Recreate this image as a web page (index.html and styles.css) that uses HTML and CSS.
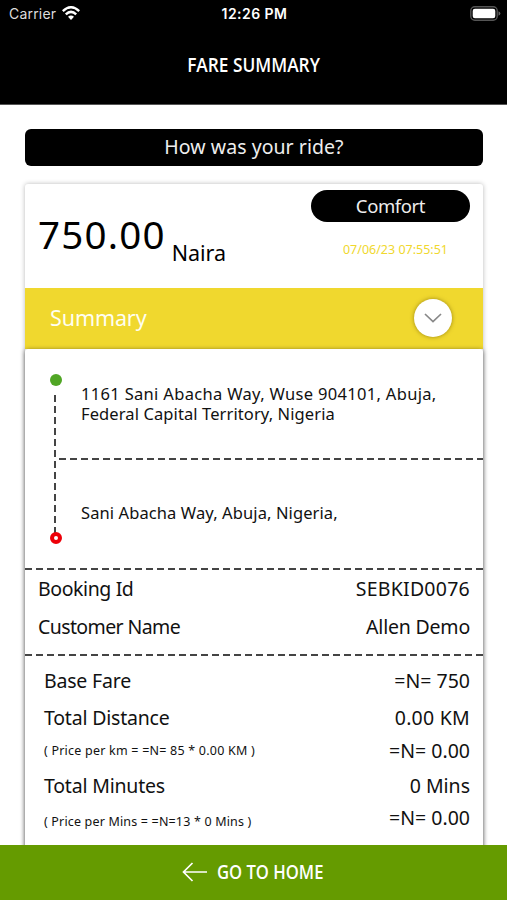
FILE: index.html
```html
<!DOCTYPE html>
<html lang="en">
<head>
<meta charset="utf-8">
<title>Fare Summary</title>
<link rel="stylesheet" href="styles.css">
</head>
<body>
<div class="app">
  <header class="header">
    <div class="status">
      <div class="carrier"><span>Carrier</span>
        <svg class="wifi" viewBox="0 0 18 14" width="18" height="14"><g fill="none" stroke="#fff" stroke-width="2.5"><path d="M.8 5.1Q9-2.5 17.2 5.1"/><path d="M3.8 8.3Q9 3.5 14.2 8.3"/></g><path fill="#fff" d="M6 10.8Q9 8.2 12 10.8L9 14Z"/></svg>
      </div>
      <span class="time">12:26 PM</span>
      <svg class="battery" viewBox="0 0 31 15" width="31" height="15"><rect x=".8" y=".8" width="26.4" height="13.4" rx="4" fill="none" stroke="#555" stroke-width="1.4"/><rect x="2.7" y="2.7" width="22.6" height="9.6" rx="2.2" fill="#fff"/><path d="M28.5 5.2Q30.4 6 30.4 7.5T28.5 9.8Z" fill="#666"/></svg>
    </div>
    <h1 class="title">FARE SUMMARY</h1>
  </header>
  <main class="main">
    <div class="question"><span>How was your ride?</span></div>
    <section class="card">
      <div class="fare">
        <div class="price"><span class="amount">750.00</span><span class="currency">Naira</span></div>
        <div class="meta"><div class="pill"><span>Comfort</span></div><span class="date">07/06/23 07:55:51</span></div>
      </div>
      <div class="summary"><span class="heading">Summary</span>
        <div class="toggle"><svg viewBox="0 0 18 10" width="18" height="10"><path d="M1 1L9 8.5L17 1" fill="none" stroke="#888" stroke-width="1.7"/></svg></div>
      </div>
      <div class="details">
        <div class="route">
          <div class="track"><i class="start"></i><i class="line"></i><i class="end"></i></div>
          <div class="stops">
            <p class="address from"><span class="first">1161 Sani Abacha Way, Wuse 904101, Abuja,</span><span class="second">Federal Capital Territory, Nigeria</span></p>
            <div class="dash"></div>
            <p class="address to">Sani Abacha Way, Abuja, Nigeria,</p>
          </div>
        </div>
        <div class="dash"></div>
        <div class="booking">
          <div class="row"><span class="tight">Booking Id</span><span class="wide">SEBKID0076</span></div>
          <div class="row"><span class="tighter">Customer Name</span><span class="snug">Allen Demo</span></div>
        </div>
        <div class="dash"></div>
        <div class="charges">
          <div class="row base"><span class="snug">Base Fare</span><span>=N= 750</span></div>
          <div class="row"><span class="snug">Total Distance</span><span class="wide">0.00 KM</span></div>
          <div class="row sub"><small>( Price per km = =N= 85 * 0.00 KM )</small><span>=N= 0.00</span></div>
          <div class="row minutes"><span class="snug">Total Minutes</span><span>0 Mins</span></div>
          <div class="row sub low"><small>( Price per Mins = =N=13 * 0 Mins )</small><span>=N= 0.00</span></div>
        </div>
      </div>
    </section>
  </main>
  <footer class="home"><svg viewBox="0 0 26 20" width="26" height="20"><path d="M25 10H2M10.5 1L1.5 10L10.5 19" fill="none" stroke="#fff" stroke-width="1.7"/></svg><span>GO TO HOME</span></footer>
</div>
</body>
</html>
```
FILE: styles.css
```css
* { box-sizing: border-box; }
body { margin: 0; background: #fff; color: #111; font-family: "Noto Sans", sans-serif; font-size: 19.5px; }
h1, p { margin: 0; }
span, small { white-space: nowrap; }
.app { display: flex; flex-direction: column; height: 900px; overflow: hidden; }
.header { height: 105px; flex: none; background: #000; color: #fff; border-bottom: 1px solid #555; }
.status { display: grid; grid-template-columns: 1fr auto 1fr; height: 27px; align-items: center; padding: 0 6px 0 9px; font-family: Inter, sans-serif; font-size: 14px; }
.carrier { display: flex; align-items: center; gap: 6px; color: #ddd; letter-spacing: .2px; }
.wifi { margin-top: -2px; }
.time { font-weight: 600; letter-spacing: .45px; margin-right: 1px; }
.battery { justify-self: end; margin-top: -1px; }
.title { margin-top: 24px; line-height: 28px; text-align: center; font-family: "Open Sans", sans-serif; font-size: 19px; font-weight: 600; transform: scaleX(.91); }
.main { flex: 1; min-height: 0; padding: 24px 24px 0 25px; overflow: hidden; }
.question { height: 37px; border-radius: 6px; background: #000; color: #eee; display: flex; justify-content: center; line-height: 35px; letter-spacing: .05px; }
.card { margin-top: 18px; box-shadow: 0 0 5px rgba(0,0,0,.28); border-radius: 3px; }
.fare { height: 104px; display: flex; justify-content: space-between; padding: 6px 13px 0; }
.price { display: flex; align-items: flex-start; color: #000; }
.amount { font-size: 38.5px; line-height: 52px; margin-top: 18px; letter-spacing: 1.2px; }
.currency { font-size: 21.5px; line-height: 28px; margin: 49px 0 0 6px; }
.meta { width: 159px; display: flex; flex-direction: column; align-items: center; }
.pill { width: 159px; height: 32px; border-radius: 16px; background: #000; color: #eee; text-align: center; font-size: 18.5px; line-height: 31px; letter-spacing: -.4px; }
.date { margin: 18px 0 0 10px; font-size: 12.5px; line-height: 20px; color: #f0d82e; }
.summary { height: 61px; display: flex; align-items: center; justify-content: space-between; padding: 0 31px 0 25px; background: #f0d82e; color: #fffef0; font-size: 21.5px; letter-spacing: -.1px; }
.heading { padding-bottom: 3px; }
.toggle { width: 38px; height: 38px; margin-bottom: 1px; border-radius: 50%; background: #fff; display: flex; align-items: center; justify-content: center; box-shadow: 0 0 4px rgba(100,80,0,.6); }
.details { height: 520px; background: #fff; box-shadow: 0 1px 5px rgba(0,0,0,.55); border-radius: 3px; }
.route { height: 219px; display: flex; }
.track { width: 34px; padding: 25px 0 0 25px; display: flex; flex-direction: column; }
.start, .end { display: block; width: 12px; height: 12px; border-radius: 50%; flex: none; }
.start { background: #50a625; }
.end { border: 4px solid #ed0009; margin-top: -4px; }
.line { width: 2px; height: 141px; margin: 9px 0 0 4px; background: repeating-linear-gradient(to bottom, #444 0 7px, transparent 7px 11px); }
.stops { flex: 1; }
.address { padding-left: 22px; font-size: 16.5px; line-height: 20px; letter-spacing: .1px; }
.address span { display: block; }
.address .first { letter-spacing: .32px; }
.from { height: 109px; padding-top: 35px; }
.to { padding-top: 43px; }
.dash { height: 2px; background: repeating-linear-gradient(to right, #444 0 7px, transparent 7px 11px); }
.booking { height: 84px; padding: 1px 13px 0; }
.row { display: flex; justify-content: space-between; height: 37.5px; line-height: 36px; }
.tight { letter-spacing: -.4px; }
.tighter { letter-spacing: -.6px; }
.snug { letter-spacing: -.2px; }
.wide { letter-spacing: .25px; }
.charges { padding: 7px 13px 0 19px; }
.charges .base { height: 37px; }
.sub { height: 31px; line-height: 25px; }
.sub small { font-size: 12.5px; letter-spacing: .22px; }
.minutes { height: 36px; line-height: 34px; }
.low small { padding-top: 4px; letter-spacing: .17px; }
.home { height: 55px; flex: none; background: #659b00; color: #fff; display: flex; align-items: center; justify-content: center; gap: 9px; font-family: "Open Sans", sans-serif; font-size: 19px; font-weight: 600; line-height: 26px; padding: 0 2px 1px 0; }
.home span { transform: scaleX(.875); transform-origin: left; margin-right: -15px; }
```
